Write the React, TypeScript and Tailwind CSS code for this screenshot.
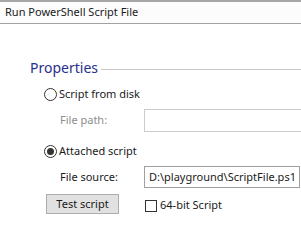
import React from 'react';

const Radio = ({ checked }: { checked?: boolean }) => (
    <span className="w-[13px] h-[13px] rounded-full border border-[#333333] bg-white flex items-center justify-center shrink-0">
        {checked && <span className="w-[7px] h-[7px] rounded-full bg-[#333333]" />}
    </span>
);

const App: React.FC = () => {
    return (
        <div
            className="w-[301px] h-[241px] bg-white overflow-hidden flex flex-col text-[11px] text-[#1a1a1a]"
            style={{ fontFamily: '"Noto Sans", "Open Sans", sans-serif' }}
        >
            <div className="h-[2px] bg-[#a6a6a6] shrink-0" />
            <div className="h-[22px] px-[5px] flex items-center bg-[#fcfcfc] border-b border-[#a0a0a0] shrink-0">
                Run PowerShell Script File
            </div>

            {/* Properties group */}
            <div className="mt-[33px] h-[22px] pl-[30px] flex items-center gap-[3px]">
                <span className="text-[14px] text-[#28308c] leading-none">Properties</span>
                <div className="flex-1 h-px bg-[#c8c8c8] mt-[2px]" />
            </div>

            <div className="mt-[7px] h-[16px] pl-[44px] flex items-center gap-[2px]">
                <Radio />
                <span>Script from disk</span>
            </div>

            <div className="mt-[7px] h-[23px] flex items-center">
                <span className="w-[144px] pl-[60px] text-[#8c8c8c] shrink-0">File path:</span>
                <div className="h-[23px] w-[200px] border border-[#cccccc] shrink-0" />
            </div>

            <div className="mt-[11px] h-[16px] pl-[44px] flex items-center gap-[2px]">
                <Radio checked />
                <span>Attached script</span>
            </div>

            <div className="mt-[7px] h-[22px] flex items-center">
                <span className="w-[144px] pl-[60px] shrink-0">File source:</span>
                <div className="h-[22px] w-[156px] border border-[#a0a0a0] flex items-center pl-[4px] shrink-0">
                    D:\playground\ScriptFile.ps1
                </div>
            </div>

            <div className="mt-[6px] h-[20px] flex items-center">
                <div className="w-[144px] pl-[46px] shrink-0">
                    <button className="w-[73px] h-[20px] bg-[#e1e1e1] border border-[#adadad] flex items-center justify-center">
                        Test script
                    </button>
                </div>
                <div className="flex items-center gap-[3px] pl-[1px] mt-[3px]">
                    <span className="w-[12px] h-[12px] border border-[#333333] bg-white shrink-0" />
                    <span>64-bit Script</span>
                </div>
            </div>
        </div>
    );
};

export default App;
